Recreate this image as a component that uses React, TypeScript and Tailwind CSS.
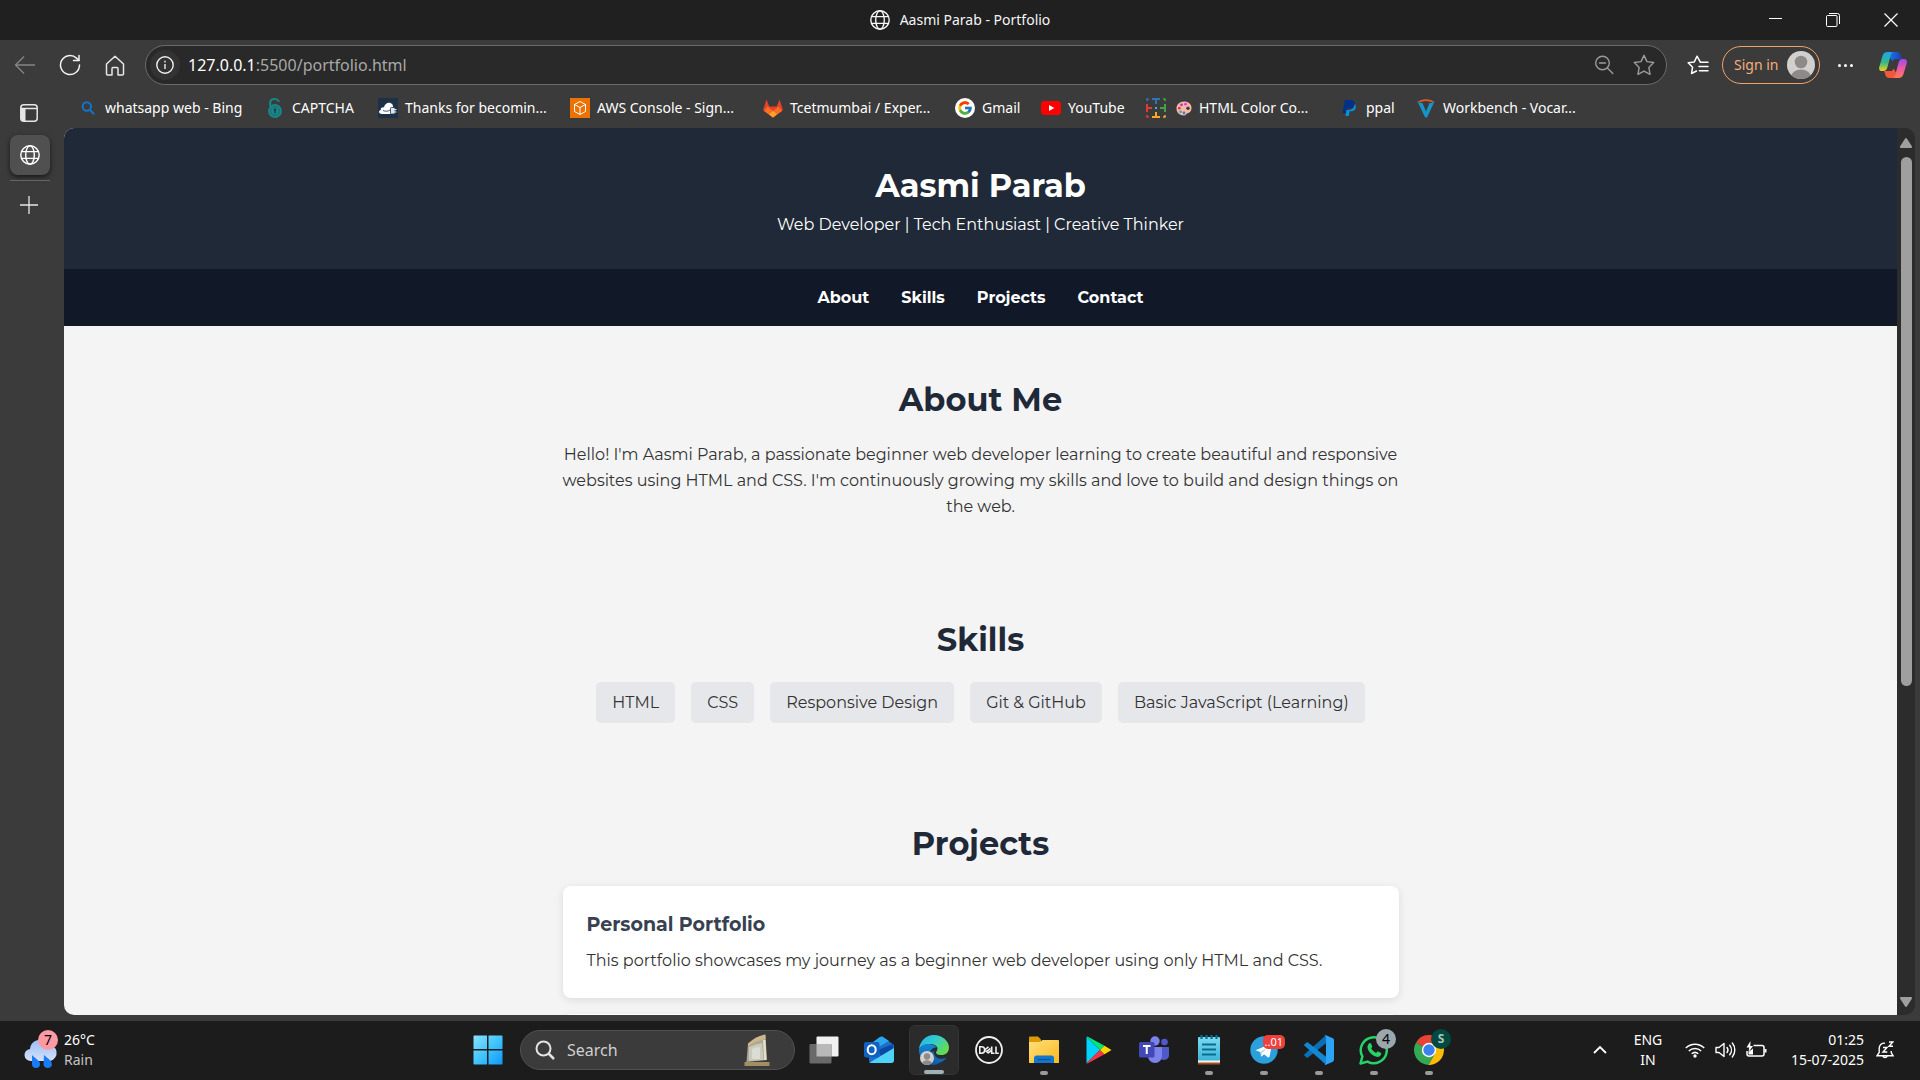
import React from "react";
import { FcGoogle } from "react-icons/fc";

type IconProps = { className?: string };

const Globe = ({ className = "size-5" }: IconProps) => (
  <svg viewBox="0 0 20 20" className={className} fill="none" stroke="currentColor" strokeWidth="1.4" aria-hidden="true">
    <circle cx="10" cy="10" r="9.2" />
    <ellipse cx="10" cy="10" rx="4.3" ry="9.2" />
    <path d="M1.6 6.6h16.8M1.6 13.4h16.8" />
  </svg>
);

const BackArrow = () => (
  <svg viewBox="0 0 22 20" className="h-5 w-[22px]" fill="none" stroke="#858585" strokeWidth="1.3" aria-hidden="true">
    <path d="M21 10H1.5M10 1.5 1.5 10l8.500 8.500" />
  </svg>
);

const Reload = () => (
  <svg viewBox="0 0 22 22" className="size-[22px]" fill="none" stroke="#f2f2f2" strokeWidth="1.5" strokeLinecap="round" aria-hidden="true">
    <path d="M20.500 11a9.500 9.500 0 1 1-3-6.900l2.200 2.200" />
    <path d="M20 1.500v5h-5.500" />
  </svg>
);

const Home = () => (
  <svg viewBox="0 0 20 21" className="h-[21px] w-5" fill="none" stroke="#e8e8e8" strokeWidth="1.500" strokeLinejoin="round" aria-hidden="true">
    <path d="M1.500 9 10 1.200 18.500 9v10a1 1 0 0 1-1 1H13v-6.500a1 1 0 0 0-1-1H8a1 1 0 0 0-1 1V20H2.500a1 1 0 0 1-1-1Z" />
  </svg>
);

const Info = () => (
  <svg viewBox="0 0 18 18" className="size-[18px]" fill="none" stroke="#f0f0f0" strokeWidth="1.4" aria-hidden="true">
    <circle cx="9" cy="9" r="8.2" />
    <path d="M9 8v5" />
    <path d="M9 4.800v1.600" />
  </svg>
);

const ZoomOut = () => (
  <svg viewBox="0 0 20 20" className="size-5" fill="none" stroke="#9a9a9a" strokeWidth="1.400" strokeLinecap="round" aria-hidden="true">
    <circle cx="8.500" cy="8" r="6.800" />
    <path d="M5.500 8h6M13.400 13l5.400 5.400" />
  </svg>
);

const starPath = "M10 1.200l2.700 5.700 6.100.9-4.400 4.400 1.100 6.300L10 15.500l-5.500 3L5.600 12.200 1.200 7.800l6.100-.9Z";

const Star = () => (
  <svg viewBox="0 0 20 20" className="size-[22px]" fill="none" stroke="#9a9a9a" strokeWidth="1.300" strokeLinejoin="round" aria-hidden="true">
    <path d={starPath} />
  </svg>
);

const Favorites = () => (
  <svg viewBox="0 0 22 20" className="h-5 w-[22px]" fill="none" stroke="#fff" strokeWidth="1.500" strokeLinejoin="round" strokeLinecap="round" aria-hidden="true">
    <path d="M13.500 7.300 10 1.200 7.300 6.900l-6.100.9 4.400 4.400-1.100 6.300L9.500 16" />
    <path d="M13.500 7.300h7.500M12 11.500h9M12.500 15.700h8.500" />
  </svg>
);

const Avatar = ({ className = "size-7" }: IconProps) => (
  <svg viewBox="0 0 28 28" className={className} aria-hidden="true">
    <defs>
      <clipPath id="avatarClip">
        <circle cx="14" cy="14" r="14" />
      </clipPath>
    </defs>
    <g clipPath="url(#avatarClip)">
      <rect width="28" height="28" fill="#d2d0ce" />
      <circle cx="14" cy="11" r="6.300" fill="#8d8a87" />
      <ellipse cx="14" cy="26" rx="10" ry="7.500" fill="#8d8a87" />
    </g>
  </svg>
);

const Copilot = () => (
  <svg viewBox="0 0 28 28" className="size-7" aria-hidden="true">
    <defs>
      <linearGradient id="cpA" x1="0" y1="0" x2="0" y2="1">
        <stop offset="0" stopColor="#1aa5ee" />
        <stop offset=".55" stopColor="#35b98a" />
        <stop offset="1" stopColor="#f3d31b" />
      </linearGradient>
      <linearGradient id="cpB" x1="0" y1="0" x2="0" y2="1">
        <stop offset="0" stopColor="#9a4bf0" />
        <stop offset=".5" stopColor="#ee5aa5" />
        <stop offset="1" stopColor="#ff7a4d" />
      </linearGradient>
      <linearGradient id="cpC" x1="0" y1="0" x2="1" y2="0">
        <stop offset="0" stopColor="#1a7fe6" />
        <stop offset="1" stopColor="#1c3fc4" />
      </linearGradient>
    </defs>
    <path d="M8 1h10c2 0 3 1 3.600 3l1.200 4H17c-2 0-3 .7-3.600 2.600Z" fill="url(#cpC)" />
    <path d="M20 27H10c-2 0-3-1-3.600-3l-1.200-4H11c2 0 3-.7 3.600-2.600Z" fill="#f4573c" />
    <path d="M8.500 1H15c-2 0-2.700 1.200-3.300 3.200L8.500 16c-.7 2.500-1.700 4-4.300 4H3c-2.400 0-3.400-1.800-2.700-4.300L3.500 5C4.400 2.200 5.700 1 8.500 1Z" fill="url(#cpA)" />
    <path d="M19.500 27H13c2 0 2.700-1.200 3.300-3.200L19.500 12c.7-2.500 1.700-4 4.300-4H25c2.400 0 3.400 1.800 2.700 4.300L24.500 23c-.9 2.800-2.200 4-5 4Z" fill="url(#cpB)" />
  </svg>
);

const BingSearch = () => (
  <svg viewBox="0 0 14 14" className="size-[14px]" fill="none" stroke="#1473cc" strokeWidth="2" aria-hidden="true">
    <circle cx="5.800" cy="5.500" r="4.200" />
    <path d="m8.700 8.700 4.500 4.500" />
  </svg>
);

const Lock = () => (
  <svg viewBox="0 0 16 20" className="h-5 w-4" fill="none" aria-hidden="true">
    <path d="M3.200 8V4.500C3.200 2 5 1 7.500 1S11.800 2.500 11.800 4" stroke="#14898b" strokeWidth="2" />
    <circle cx="8" cy="13" r="6.900" fill="#14898b" />
    <circle cx="8" cy="13" r="4.500" stroke="#2f5a5b" strokeWidth=".8" />
    <circle cx="8" cy="11.800" r="1.300" fill="#2b3b3c" />
    <path d="M8 12v3.500" stroke="#2b3b3c" strokeWidth="1.300" />
  </svg>
);

const CloudBadge = () => (
  <svg viewBox="0 0 20 20" className="size-5" aria-hidden="true">
    <rect width="20" height="20" fill="#1e3247" />
    <path d="M4 16c-3.500 0-4-3.500-1-4C2 10 4.500 9 6 9.300 7 4.500 12 3.500 14.500 6.500l1 3.500c2.500.5 3 5-.5 6Z" fill="#fff" />
    <path d="M5 12.500c2 1 5 1 7-.5" stroke="#1e3247" strokeWidth=".8" fill="none" />
    <rect x="12.500" y="9.500" width="4.500" height="6.500" rx="1" fill="#dfe5ea" stroke="#1e3247" strokeWidth=".8" />
    <path d="M15 11.500h3.500M15 14h3.500" stroke="#dfe5ea" strokeWidth="1" />
  </svg>
);

const AwsBox = () => (
  <svg viewBox="0 0 20 20" className="size-5" aria-hidden="true">
    <rect width="20" height="20" fill="#ed7100" />
    <path d="m10 3.500 5.500 3v7L10 16.500l-5.500-3v-7ZM4.500 6.500 10 9.500l5.500-3M10 9.500v7" fill="none" stroke="#fff" strokeWidth="1" strokeLinejoin="round" />
  </svg>
);

const Gitlab = () => (
  <svg viewBox="0 0 20 19" className="h-[19px] w-5" aria-hidden="true">
    <path d="M10 18.500 0 11 3.500.5 6.300 7.500h7.400L16.500.5 20 11Z" fill="#e24329" />
    <path d="M10 18.500 1 12l3.500-4.500L10 12l5.500-4.500L19 12Z" fill="#fc6d26" />
    <path d="m10 18.500-4-3.200 4-3.300 4 3.300Z" fill="#fca326" />
  </svg>
);

const GoogleBadge = () => (
  <span className="grid size-5 place-items-center rounded-full bg-white">
    <FcGoogle className="size-4" aria-hidden="true" />
  </span>
);

const YouTube = () => (
  <svg viewBox="0 0 20 14" className="h-[14px] w-5" aria-hidden="true">
    <rect width="20" height="14" rx="3.500" fill="#f00" />
    <path d="m8 4 5.300 3L8 10Z" fill="#fff" />
  </svg>
);

const GridIcon = () => (
  <svg viewBox="0 0 20 20" className="size-5" fill="none" strokeWidth="1.600" aria-hidden="true">
    <path d="M6 1h8M10 1v5" stroke="#2e75b6" strokeWidth="2" />
    <path d="M1 6v8M1 10h5" stroke="#e53935" strokeWidth="2" />
    <path d="M19 6v8M19 10h-5" stroke="#43a047" strokeWidth="2" />
    <path d="M6 19h8M10 19v-5" stroke="#f9a825" strokeWidth="2" />
    <path d="M9 10h2" stroke="#26c6da" strokeWidth="2" />
    <path d="M1 3V1h2" stroke="#2e75b6" />
    <path d="M17 1h2v2" stroke="#43a047" />
    <path d="M1 17v2h2" stroke="#e53935" />
    <path d="M17 19h2v-2" stroke="#f9a825" />
  </svg>
);

const Palette = () => (
  <svg viewBox="0 0 16 15" className="h-[15px] w-4" aria-hidden="true">
    <path d="M8 .5c4.300 0 7.500 2.500 7.500 6.500 0 3.500-2.500 5-4.500 5.500-1 .5-1 2-3 2C3.500 14.500.5 11.500.5 7.500S3.700.5 8 .5Z" fill="#fab9a5" />
    <circle cx="5.500" cy="3.800" r="1.400" fill="#a238d8" />
    <circle cx="9.500" cy="3.200" r="1.400" fill="#d23cf0" />
    <circle cx="3.300" cy="7.200" r="1.400" fill="#e8323c" />
    <circle cx="4.500" cy="10.800" r="1.400" fill="#27b3c9" />
    <circle cx="8" cy="12" r="1.400" fill="#2f7fe8" />
    <circle cx="12" cy="7.300" r="1.700" fill="#3b3b3b" />
  </svg>
);

const Vocareum = () => (
  <svg viewBox="0 0 18 19" className="h-[19px] w-[18px]" aria-hidden="true">
    <path d="M0 1.500 3 4h2.500L9 12.500 12.500 4H15l3-2.500L10 18.500H8.200Z" fill="#1795c9" />
    <path d="M2 2.800c4-2.200 10-2.200 14 0" fill="none" stroke="#e4592b" strokeWidth="1.600" />
  </svg>
);

const bookmarks: { label: string; width: string; icon: React.ReactNode }[] = [
  { label: "whatsapp web - Bing", width: "w-[187px]", icon: <BingSearch /> },
  { label: "CAPTCHA", width: "w-[113px]", icon: <Lock /> },
  { label: "Thanks for becomin...", width: "w-[192px]", icon: <CloudBadge /> },
  { label: "AWS Console - Sign...", width: "w-[193px]", icon: <AwsBox /> },
  { label: "Tcetmumbai / Exper...", width: "w-[192px]", icon: <Gitlab /> },
  { label: "Gmail", width: "w-[86px]", icon: <GoogleBadge /> },
  { label: "YouTube", width: "w-[105px]", icon: <YouTube /> },
  {
    label: "HTML Color Co...",
    width: "w-[193px]",
    icon: (
      <span className="flex items-center gap-[10px]">
        <GridIcon />
        <Palette />
      </span>
    ),
  },
  {
    label: "ppal",
    width: "w-[77px]",
    icon: (
      <svg viewBox="0 0 14 16" className="h-4 w-[14px]" aria-hidden="true">
        <path d="M3 0h5.500C11.500 0 13 1.500 12.500 4 12 7 10 8.300 7 8.300H5L4.200 13H.5Z" fill="#003087" />
        <path d="M12.800 4.300C14 5.300 14.200 6.500 13.700 8c-.6 2.300-2.300 3.300-4.700 3.300H7.500L6.700 16H3.500l1-6h2.300c3.500 0 5.500-2 6-5.700Z" fill="#0095df" />
      </svg>
    ),
  },
  { label: "Workbench - Vocar...", width: "w-[180px]", icon: <Vocareum /> },
];

const TitleBar = () => (
  <header className="grid h-10 shrink-0 grid-cols-[1fr_auto_1fr] items-center bg-[#202020] text-[#f5f5f5]">
    <span />
    <div className="flex items-center gap-[10px]">
      <Globe />
      <span className="text-sm">Aasmi Parab - Portfolio</span>
    </div>
    <div className="flex items-center justify-end">
      <button aria-label="Minimize" className="grid h-10 w-[58px] place-items-center">
        <span className="mb-1 h-px w-[13px] bg-white" />
      </button>
      <button aria-label="Restore" className="grid h-10 w-[58px] place-items-center">
        <svg viewBox="0 0 14 14" className="size-[14px]" fill="none" stroke="#fff" aria-hidden="true">
          <rect x=".5" y="2.500" width="10.500" height="11" rx="1" />
          <path d="M3 .5h8.500a2 2 0 0 1 2 2V11" />
        </svg>
      </button>
      <button aria-label="Close" className="grid h-10 w-[58px] place-items-center">
        <svg viewBox="0 0 14 14" className="size-[14px]" stroke="#fff" strokeWidth="1.200" aria-hidden="true">
          <path d="m.5.5 13 13m0-13-13 13" />
        </svg>
      </button>
    </div>
  </header>
);

const Toolbar = () => (
  <div className="flex h-[50px] shrink-0 items-center">
    <div className="flex w-[145px] shrink-0 items-center pl-[2px]">
      <button aria-label="Back" className="grid h-9 w-[45px] place-items-center"><BackArrow /></button>
      <button aria-label="Refresh" className="grid h-9 w-[45px] place-items-center"><Reload /></button>
      <button aria-label="Home" className="grid h-9 w-[45px] place-items-center"><Home /></button>
    </div>
    <div className="flex h-10 min-w-0 flex-1 items-center rounded-full border border-[#6b6b6b] bg-[#292929] pr-2 pl-1">
      <button aria-label="Site information" className="grid size-[30px] place-items-center rounded-full bg-[#333]">
        <Info />
      </button>
      <a href="#top" className="ml-2 flex-1 text-base text-[#a8a8a8]">
        <span className="text-white">127.0.0.1</span>:5500/portfolio.html
      </a>
      <button aria-label="Zoom out" className="grid h-8 w-10 place-items-center"><ZoomOut /></button>
      <button aria-label="Add to favorites" className="ml-[6px] grid h-8 w-7 place-items-center"><Star /></button>
    </div>
    <button aria-label="Favorites" className="ml-[19px] grid h-9 w-6 place-items-center"><Favorites /></button>
    <button className="ml-3 flex h-[38px] w-[98px] items-center justify-between rounded-full border border-[#f0a36b] pr-1 pl-[11px] text-sm whitespace-nowrap text-[#f5ae7b]">
      Sign in
      <Avatar />
    </button>
    <button aria-label="Settings and more" className="ml-[15px] flex h-9 w-5 items-center justify-center gap-[3px]">
      <span className="size-[3px] rounded-full bg-white" />
      <span className="size-[3px] rounded-full bg-white" />
      <span className="size-[3px] rounded-full bg-white" />
    </button>
    <button aria-label="Copilot" className="mr-[13px] ml-6 grid h-9 w-7 place-items-center"><Copilot /></button>
  </div>
);

const Sidebar = () => (
  <aside className="flex w-16 shrink-0 flex-col items-start pl-[10px]">
    <button aria-label="Tab actions" className="grid h-[45px] w-[38px] place-items-center">
      <svg viewBox="0 0 18 18" className="size-[18px]" fill="none" stroke="#e6e6e6" strokeWidth="1.500" aria-hidden="true">
        <rect x=".8" y=".8" width="16.400" height="16.400" rx="3" />
        <path d="M1 4.500h16" />
        <path d="M1 4.500h4.500V17H3.500A2.500 2.500 0 0 1 1 14.500Z" fill="#e6e6e6" stroke="none" />
      </svg>
    </button>
    <button aria-label="Aasmi Parab - Portfolio" className="grid size-10 place-items-center rounded-lg bg-[#505050] text-white shadow-[0_2px_5px_rgba(0,0,0,0.6)]">
      <Globe />
    </button>
    <span className="mt-[5px] h-px w-10 bg-[#666]" />
    <button aria-label="New tab" className="mt-[6px] grid h-9 w-[38px] place-items-center">
      <svg viewBox="0 0 18 18" className="size-[18px]" stroke="#e6e6e6" strokeWidth="1.300" aria-hidden="true">
        <path d="M9 0v18M0 9h18" />
      </svg>
    </button>
  </aside>
);

const BookmarkBar = () => (
  <nav aria-label="Bookmarks" className="flex h-[38px] shrink-0 items-center pb-[2px] pl-[14px]">
    {bookmarks.map((b) => (
      <a key={b.label} href="#top" className={`${b.width} flex shrink-0 items-center gap-[7px] text-sm whitespace-nowrap text-white`}>
        <span className="grid min-w-5 place-items-center">{b.icon}</span>
        {b.label}
      </a>
    ))}
  </nav>
);

const skills = ["HTML", "CSS", "Responsive Design", "Git & GitHub", "Basic JavaScript (Learning)"];

const SectionTitle = ({ children }: { children: React.ReactNode }) => (
  <h2 className="mb-4 text-center text-[32px] leading-[52px] font-bold text-[#1f2937]">{children}</h2>
);

const Portfolio = () => (
  <main id="top" className="min-w-0 flex-1 overflow-hidden bg-[#f4f4f4] font-['Montserrat',Inter,sans-serif] text-base leading-[26px] text-[#333]">
    <div className="bg-[#1f2937] pt-8 pb-[31px] text-center text-white">
      <h1 className="text-[32px] leading-[52px] font-bold">Aasmi Parab</h1>
      <p>Web Developer | Tech Enthusiast | Creative Thinker</p>
    </div>
    <nav aria-label="Sections" className="flex justify-center gap-8 bg-[#111827] pt-4 pb-[15px] font-bold text-white">
      <a href="#about">About</a>
      <a href="#skills">Skills</a>
      <a href="#projects">Projects</a>
      <a href="#contact">Contact</a>
    </nav>
    <section id="about" className="mx-auto max-w-[900px] px-8 pt-12 pb-[47px] text-center">
      <SectionTitle>About Me</SectionTitle>
      <p>
        Hello! I'm Aasmi Parab, a passionate beginner web developer learning to create beautiful and responsive
        websites using HTML and CSS. I'm continuously growing my skills and love to build and design things on the web.
      </p>
    </section>
    <section id="skills" className="mx-auto max-w-[900px] px-8 pt-[47px] pb-12">
      <SectionTitle>Skills</SectionTitle>
      <ul className="flex justify-center gap-4">
        {skills.map((s) => (
          <li key={s} className="rounded-[5px] bg-[#e5e7eb] px-4 py-2 leading-[25px] whitespace-nowrap">{s}</li>
        ))}
      </ul>
    </section>
    <section id="projects" className="mx-auto max-w-[900px] px-8 pt-[47px] pb-12">
      <SectionTitle>Projects</SectionTitle>
      <div className="flex flex-col gap-4">
        <article className="rounded-lg bg-white p-6 shadow-[0_2px_8px_rgba(0,0,0,0.1)]">
          <h3 className="mb-2 text-[19px] leading-[30px] font-bold text-[#374151]">Personal Portfolio</h3>
          <p>This portfolio showcases my journey as a beginner web developer using only HTML and CSS.</p>
        </article>
        <article className="h-28 rounded-lg bg-white shadow-[0_2px_8px_rgba(0,0,0,0.1)]" />
      </div>
    </section>
  </main>
);

const ScrollBar = () => (
  <div className="flex w-[18px] shrink-0 flex-col items-center bg-[#2c2c2c] pt-[10px] pb-2" aria-hidden="true">
    <svg viewBox="0 0 12 10" className="h-[10px] w-3"><path d="M6 0c.5 0 .8.3 1 .7L12 8.500c.3.800 0 1.500-1 1.500H1C0 10-.3 9.300 0 8.500L5 .7c.2-.4.500-.7 1-.7Z" fill="#9f9f9f" /></svg>
    <div className="mt-[9px] flex w-full flex-1 flex-col items-center">
      <div className="h-[63%] w-[11px] rounded-full bg-[#9f9f9f]" />
    </div>
    <svg viewBox="0 0 12 10" className="h-[10px] w-3"><path d="M6 10c.5 0 .8-.3 1-.7L12 1.500C12.300.700 12 0 11 0H1C0 0-.3.700 0 1.500L5 9.300c.2.400.500.700 1 .700Z" fill="#9f9f9f" /></svg>
  </div>
);

const WindowsLogo = () => (
  <svg viewBox="0 0 30 30" className="size-[30px]" aria-hidden="true">
    <defs>
      <linearGradient id="win" x1="0" y1="0" x2="1" y2="1">
        <stop offset="0" stopColor="#8be2ff" />
        <stop offset=".5" stopColor="#41c5fb" />
        <stop offset="1" stopColor="#0f97fb" />
      </linearGradient>
    </defs>
    <path d="M1 .5h13v13.500H.5V1ZM15.500.5h13.500l.5.500v13H15.500ZM.5 15.500H14V29.500H1l-.5-.5ZM15.500 15.500h14V29l-.5.500H15.500Z" fill="url(#win)" />
  </svg>
);

const Lighthouse = () => (
  <svg viewBox="0 0 26 32" className="h-8 w-[26px]" aria-hidden="true">
    <path d="M2.500 28 4 9.500 21.500 2l1.500 24Z" fill="#aaa795" />
    <path d="M4 9.500Q12 2 21.500.5V5Q12 7 4 12Z" fill="#cdb78a" />
    <path d="M5 27V13q7-3 13-4l1.500 17Z" fill="#c9cabd" />
    <path d="M8 25V15q4-2 8-2v12Z" fill="#dcddd2" />
    <path d="M19 6h2.500l1 20H20Z" fill="#e3dec6" />
    <path d="M.5 28h25v4H.5Z" fill="#a38d62" />
  </svg>
);

const TaskView = () => (
  <svg viewBox="0 0 30 28" className="h-7 w-[30px]" aria-hidden="true">
    <rect x="7.500" y=".5" width="22" height="20" rx="1" fill="#f1f1f1" />
    <rect x=".5" y="8" width="22" height="19.500" rx="1" fill="#6a6a6a" />
    <path d="M7.500 8h15v12.500h-15Z" fill="#b9b9b9" />
  </svg>
);

const Outlook = () => (
  <svg viewBox="0 0 30 28" className="h-7 w-[30px]" aria-hidden="true">
    <path d="M5 9 16 1q1.500-1 3 0l11 8v15q0 3-3 3H8q-3 0-3-3Z" fill="#1b6fd0" />
    <path d="M5 9 16 1q1.500-1 3 0l6 4-14 8Z" fill="#2aa8ea" />
    <path d="M14 14 29 8v5L17 20Z" fill="#0d47a0" />
    <path d="M5 27 30 12v12q0 3-3 3Z" fill="#4fd2f7" />
    <rect y="6" width="15.500" height="15.500" rx="2" fill="#0f62c0" />
    <ellipse cx="7.700" cy="13.700" rx="4" ry="4.500" fill="none" stroke="#fff" strokeWidth="2" />
  </svg>
);

const Edge = () => (
  <svg viewBox="0 0 30 30" className="size-[30px]" aria-hidden="true">
    <defs>
      <linearGradient id="edgeTop" x1="0" y1="0" x2="1" y2=".6">
        <stop offset="0" stopColor="#29b1ea" />
        <stop offset=".5" stopColor="#31cbd0" />
        <stop offset="1" stopColor="#66dd4e" />
      </linearGradient>
      <linearGradient id="edgeSide" x1="0" y1="0" x2="0" y2="1">
        <stop offset="0" stopColor="#1489d8" />
        <stop offset="1" stopColor="#0c59a4" />
      </linearGradient>
    </defs>
    <path d="M0 14C1 6 7 0 15 0s15 6 15 12.500c0 5-3.500 7.500-7.500 7.500-4 0-5.500-1.500-5.500-2.500s1.500-1.500 1.500-4S15 9 10.500 9 2 11 0 14Z" fill="url(#edgeTop)" />
    <path d="M0 14c2-3.500 6-5.500 10-5 3.500.3 6.500 2 7.500 3.500-3-.5-6.500 2-6.500 6.500 0 6 6 9.500 11 7.500-2 2-4.500 3.500-8 3.500C6 30-.8 22 0 14Z" fill="url(#edgeSide)" />
    <path d="M11 18.500c0 5.500 4 9 9 9 2.500 0 6-2 7.500-5-7 3-13 0-12.500-6.500-2.500.5-4 1-4 2.500Z" fill="#1565b5" />
  </svg>
);

const Dell = () => (
  <svg viewBox="0 0 28 28" className="size-7" aria-hidden="true">
    <circle cx="14" cy="14" r="13" fill="none" stroke="#f0f0f0" strokeWidth="1.800" />
    <g fill="none" stroke="#f0f0f0" strokeWidth="1.600">
      <path d="M4.800 10.800v6.400h1.700a3.200 3.200 0 0 0 0-6.400Z" />
      <path d="m9.500 14 4-3.200M9.500 14l4 3.200M11.500 15.600l4-3.200M13 17l3.500-2.700" />
      <path d="M16.700 10.500v6.700h2.800M21 10.500v6.700h2.800" />
    </g>
  </svg>
);

const Explorer = () => (
  <svg viewBox="0 0 30 27" className="h-[27px] w-[30px]" aria-hidden="true">
    <defs>
      <linearGradient id="folder" x1="0" y1="0" x2="1" y2="1">
        <stop offset="0" stopColor="#ffe07a" />
        <stop offset="1" stopColor="#fbb920" />
      </linearGradient>
    </defs>
    <path d="M0 1.500Q0 .5 1 .5h8l3 3v4H0Z" fill="#dc9a08" />
    <path d="M0 6h11l2.500-2H29q1 0 1 1v21.500q0 .5-.5.500H.5Q0 27 0 26.500Z" fill="url(#folder)" />
    <path d="M5 27v-5q0-2.500 2.500-2.500h15Q25 19.500 25 22v5Z" fill="#1277cc" />
    <path d="M8.500 23.500h13" stroke="#0b4f95" strokeWidth="1.200" />
  </svg>
);

const Play = () => (
  <svg viewBox="0 0 26 28" className="h-7 w-[26px]" aria-hidden="true">
    <path d="M.5.8v26.400L14 14Z" fill="#00d2ff" />
    <path d="M.5.8Q1 .2 2 .8L18.500 9.700 14 14Z" fill="#00e676" />
    <path d="M.5 27.200Q1 27.800 2 27.200L18.500 18.300 14 14Z" fill="#f43648" />
    <path d="M18.500 9.700 25.500 14l-7 4.300L14 14Z" fill="#ffd500" />
  </svg>
);

const Teams = () => (
  <svg viewBox="0 0 30 28" className="h-7 w-[30px]" aria-hidden="true">
    <circle cx="25.500" cy="6" r="3.300" fill="#5059c9" />
    <path d="M21 11h8.500q.5 0 .5 1v7a5 5 0 0 1-9 3Z" fill="#5059c9" />
    <circle cx="16" cy="5" r="4.700" fill="#7b83eb" />
    <path d="M9 11h14v9a7 7 0 0 1-14 0Z" fill="#7b83eb" />
    <rect y="6" width="15.500" height="15.500" rx="1.500" fill="#4248b5" />
    <path d="M4 10h7.500M7.750 10v8" stroke="#fff" strokeWidth="2" />
  </svg>
);

const Notepad = () => (
  <svg viewBox="0 0 22 30" className="h-[30px] w-[22px]" aria-hidden="true">
    <defs>
      <linearGradient id="note" x1="0" y1="0" x2="0" y2="1">
        <stop offset="0" stopColor="#7bdcf0" />
        <stop offset="1" stopColor="#3cb3d8" />
      </linearGradient>
    </defs>
    <path d="M0 26h22v3.500H0Z" fill="#a5521b" />
    <path d="M0 24h22v3.500H0Z" fill="#f4f4f4" />
    <rect y="2" width="22" height="23.500" rx="1" fill="url(#note)" />
    <path d="M3.500 0v4M8.500 0v4M13.500 0v4M18.500 0v4" stroke="#0b6c93" strokeWidth="2.200" />
    <path d="M4 9.500h14M4 14.500h14M4 19.500h14" stroke="#0b6c93" strokeWidth="1.800" />
  </svg>
);

const Telegram = () => (
  <svg viewBox="0 0 28 28" className="size-7" aria-hidden="true">
    <circle cx="14" cy="14" r="13.700" fill="#2aa1dd" />
    <path d="M5.500 14.200 21 7.800q1.300-.4 1 1L19.500 20.500q-.4 1.400-1.700.7L14 18.300l-2 2q-.9.600-1-.6l-.7-3.700Z" fill="#fff" />
    <path d="m10.300 16 8-5.500-6.200 6.500-.6 3Z" fill="#b9d9ec" />
  </svg>
);

const VsCode = () => (
  <svg viewBox="0 0 30 30" className="size-[30px]" aria-hidden="true">
    <path d="M22 .3v8L4 22.500q-.7.500-1.400 0L.5 20.700q-.7-.7 0-1.400Z" fill="#0b6fb8" />
    <path d="M22 29.700v-8L4 7.500q-.7-.5-1.400 0L.5 9.300q-.7.700 0 1.400Z" fill="#1487d4" />
    <path d="M22 .2 28.800 3.300Q30 4 30 5.200v19.600q0 1.200-1.200 1.900L22 29.800Q21 30 20.500 29q1.500.5 1.500-1.500v-25Q22 .5 20.500 1 21 0 22 .2Z" fill="#2ba4f5" />
  </svg>
);

const WhatsApp = () => (
  <svg viewBox="0 0 30 30" className="size-[30px]" aria-hidden="true">
    <path d="M1.500 28.500l1.900-7A13 13 0 1 1 8.500 26.600Z" fill="none" stroke="#25d366" strokeWidth="2.500" strokeLinejoin="round" />
    <path d="M10.300 8.200c.6-.5 1.400-.3 1.700.4l1.100 2.600c.2.500 0 1-.9 2 1.200 2.300 2.700 3.700 5 4.700.9-1.200 1.500-1.500 2-1.300l2.500 1.200c.5.300.6.700.4 1.500-.5 2-2.500 3-4.500 2.500C13 20.500 9.600 17 8.600 13.200c-.4-2 .3-3.800 1.700-5Z" fill="#25d366" />
  </svg>
);

const Chrome = () => (
  <svg viewBox="0 0 30 30" className="size-[30px]" aria-hidden="true">
    <path d="M15 15 2 7.500A15 15 0 0 1 28 7.500L28.500 8.500H15Z" fill="#ea4335" />
    <path d="M15 15 2 7.500A15 15 0 0 0 14.500 30L21 18.500Z" fill="#34a853" />
    <path d="M15 8.500H28.500A15 15 0 0 1 14.500 30L21 18.500Z" fill="#fbbc05" />
    <circle cx="15" cy="15" r="7.200" fill="#fff" />
    <circle cx="15" cy="15" r="5.700" fill="#3b82f0" />
  </svg>
);

const apps: { name: string; icon: React.ReactNode; running?: boolean; active?: boolean; badge?: React.ReactNode }[] = [
  { name: "Task View", icon: <TaskView /> },
  { name: "Outlook", icon: <Outlook /> },
  {
    name: "Microsoft Edge",
    icon: <Edge />,
    active: true,
    badge: <span className="absolute bottom-[9px] left-[10px]"><Avatar className="size-[14px]" /></span>,
  },
  { name: "Dell", icon: <Dell /> },
  { name: "File Explorer", icon: <Explorer />, running: true },
  { name: "Google Play", icon: <Play /> },
  { name: "Teams", icon: <Teams /> },
  { name: "Notepad", icon: <Notepad />, running: true },
  {
    name: "Telegram",
    icon: <Telegram />,
    running: true,
    badge: <span className="absolute top-[10px] right-1 rounded-[5px] bg-[#f0403c] px-[2px] text-[11px] leading-[14px] text-white">..01</span>,
  },
  { name: "Visual Studio Code", icon: <VsCode />, running: true },
  {
    name: "WhatsApp",
    icon: <WhatsApp />,
    running: true,
    badge: <span className="absolute top-1 right-[3px] grid size-5 place-items-center rounded-full bg-[#9ba7ad] text-sm text-black">4</span>,
  },
  {
    name: "Chrome",
    icon: <Chrome />,
    running: true,
    badge: <span className="absolute top-1 right-[3px] grid size-5 place-items-center rounded-full bg-[#04493f] text-xs font-bold text-[#a8c7c2]">S</span>,
  },
];

const Taskbar = () => (
  <footer className="flex h-[59px] shrink-0 items-center bg-[#1c1c1c] pb-[2px] text-sm text-white">
    <button className="flex flex-1 items-center gap-[6px] pl-6 text-left">
      <span className="relative">
        <svg viewBox="0 0 34 38" className="h-[38px] w-[34px]" aria-hidden="true">
          <defs>
            <linearGradient id="cloud" x1="0" y1="0" x2="0" y2="1">
              <stop offset="0" stopColor="#9cbdf5" />
              <stop offset="1" stopColor="#d5e1fb" />
            </linearGradient>
          </defs>
          <path d="M7 30a6 6 0 0 1-1-12A9 9 0 0 1 23 14a8 8 0 0 1 3 16Z" fill="url(#cloud)" />
          <path d="M8 24c2 3 8 5 8 9a4 4 0 0 1-8 0ZM20 24c3 3 8 5 8 10a4.500 4.500 0 0 1-8.500 0Z" fill="#1a7cf5" />
        </svg>
        <span className="absolute -top-[1px] right-0 grid size-5 place-items-center rounded-full bg-[#ff99a4] text-sm text-black">7</span>
      </span>
      <span className="leading-5">
        <span className="block">26°C</span>
        <span className="block text-[#c4c4c4]">Rain</span>
      </span>
    </button>
    <div className="flex shrink-0 items-center pl-[9px]">
      <button aria-label="Start" className="mr-[17px] grid size-[30px] place-items-center"><WindowsLogo /></button>
      <label className="flex h-10 w-[275px] items-center rounded-full border border-[#505050] bg-[#3b3b3b] pr-6 pl-[14px]">
        <svg viewBox="0 0 20 20" className="size-5 shrink-0" fill="none" stroke="#e2e2e2" strokeWidth="2" aria-hidden="true">
          <circle cx="8.500" cy="8.500" r="7" />
          <path d="m13.500 13.500 5.500 5.500" strokeWidth="2.500" />
        </svg>
        <input aria-label="Search" placeholder="Search" className="ml-3 w-0 min-w-0 flex-1 bg-transparent text-base outline-none placeholder:text-[#cfcfcf]" />
        <Lighthouse />
      </label>
      <div className="ml-1 flex items-center gap-[5px]">
        {apps.map((a) => (
          <button
            key={a.name}
            aria-label={a.name}
            className={
              a.active
                ? "relative grid size-[50px] place-items-center rounded-md border border-[#343434] bg-[#2b2b2b]"
                : "relative grid size-[50px] place-items-center"
            }
          >
            {a.icon}
            {a.badge}
            {a.active && <span className="absolute bottom-0 left-[14px] h-1 w-5 rounded-full bg-[#9fb0b8]" />}
            {a.running && <span className="absolute bottom-0 left-[21px] h-1 w-2 rounded-full bg-[#9a9a9a]" />}
          </button>
        ))}
      </div>
    </div>
    <div className="flex flex-1 items-center justify-end pr-[26px]">
      <button aria-label="Show hidden icons" className="mr-[26px]">
        <svg viewBox="0 0 14 9" className="h-[9px] w-[14px]" fill="none" stroke="#fff" strokeWidth="1.800" aria-hidden="true">
          <path d="m1 8 6-6 6 6" />
        </svg>
      </button>
      <button className="mr-[22px] w-[30px] text-center leading-5">
        <span className="block">ENG</span>
        <span className="block">IN</span>
      </button>
      <button aria-label="Network, volume and battery" className="mr-5 flex items-center gap-[10px]">
        <svg viewBox="0 0 20 16" className="h-4 w-5" fill="none" stroke="#fff" strokeWidth="1.500" aria-hidden="true">
          <path d="M.8 6a13 13 0 0 1 18.400 0M3.800 9a9 9 0 0 1 12.400 0M6.700 11.800a5 5 0 0 1 6.600 0" />
          <circle cx="10" cy="14" r="1.700" fill="#fff" stroke="none" />
        </svg>
        <svg viewBox="0 0 21 18" className="h-[18px] w-[21px]" fill="none" stroke="#fff" strokeWidth="1.400" strokeLinejoin="round" strokeLinecap="round" aria-hidden="true">
          <path d="M1 6.500h3l5-4v13l-5-4H1ZM12 6.500a4 4 0 0 1 0 5M14.700 4.200a7.500 7.500 0 0 1 0 9.600M17.300 2a11 11 0 0 1 0 14" />
        </svg>
        <svg viewBox="0 0 21 17" className="h-[17px] w-[21px]" fill="none" stroke="#fff" strokeWidth="1.500" aria-hidden="true">
          <path d="M7.500 4.500H16q2 0 2 2v6.500q0 2-2 2H3q-2 0-2-2V10" />
          <path d="M18.500 8v3.500h2V8Z" fill="#fff" stroke="none" />
          <path d="M4.500 0 .5 6.500h2.700L2.500 11 7 5H4.300ZM2.500 13.500V11L7 7.500v6Z" fill="#fff" stroke="none" />
        </svg>
      </button>
      <button className="mr-3 min-w-[77px] text-right leading-5 whitespace-nowrap">
        <span className="block">01:25</span>
        <span className="block">15-07-2025</span>
      </button>
      <button aria-label="Notifications">
        <svg viewBox="0 0 18 18" className="size-[18px]" fill="none" stroke="#fff" strokeWidth="1.400" aria-hidden="true">
          <path d="M9 2.200A5 5 0 0 0 3.200 7v4.500L1 14.700h16l-1.800-3.200V10M6.800 15a2.300 2.300 0 0 0 4.400 0" />
          <path d="M7 6.500h4l-4 4.500h4.300M13 1h3.800L13 5.200h4" />
        </svg>
      </button>
    </div>
  </footer>
);

export default function App() {
  return (
    <div className="flex h-screen flex-col overflow-hidden bg-[#3b3b3b] font-['Segoe_UI','Noto_Sans',sans-serif]">
      <TitleBar />
      <Toolbar />
      <div className="flex min-h-0 flex-1">
        <Sidebar />
        <div className="flex min-w-0 flex-1 flex-col pr-[5px] pb-[6px]">
          <BookmarkBar />
          <div className="flex min-h-0 flex-1 overflow-hidden rounded-[10px]">
            <Portfolio />
            <ScrollBar />
          </div>
        </div>
      </div>
      <Taskbar />
    </div>
  );
}
